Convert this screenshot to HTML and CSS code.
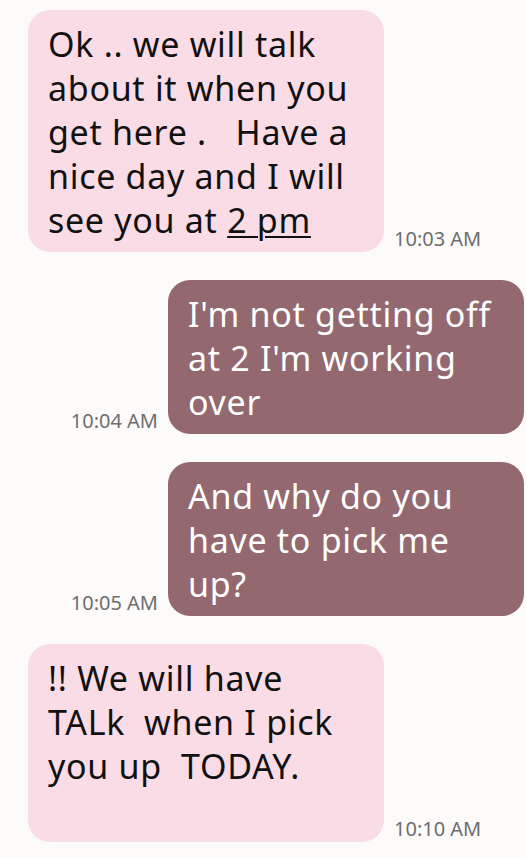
FILE: index.html
```
<!DOCTYPE html>
<html lang="en">
<head>
    <meta charset="UTF-8">
    <meta name="viewport" content="width=device-width, initial-scale=1.0">
    <title>Messages</title>
    <link rel="stylesheet" href="styles.css">
</head>
<body>

    <div class="thread">
        <div class="row incoming">
            <div class="bubble">Ok .. we will talk<br>about it when you<br>get here .&nbsp;&nbsp; Have a<br>nice day and I will<br>see you at <span class="link">2 pm</span></div>
            <span class="time">10:03 AM</span>
        </div>

        <div class="row outgoing">
            <span class="time">10:04 AM</span>
            <div class="bubble">I'm not getting off<br>at 2 I'm working<br>over</div>
        </div>

        <div class="row outgoing">
            <span class="time">10:05 AM</span>
            <div class="bubble">And why do you<br>have to pick me<br>up?</div>
        </div>

        <div class="row incoming">
            <div class="bubble">!! We will have<br>TALk&nbsp; when I pick<br>you up&nbsp; TODAY.<br>&nbsp;</div>
            <span class="time">10:10 AM</span>
        </div>
    </div>

</body>
</html>
```

FILE: styles.css
```
* { margin: 0; padding: 0; box-sizing: border-box; }
body {
    background-color: #fcfbfa;
    font-family: 'Noto Sans', sans-serif;
}
.thread {
    display: flex;
    flex-direction: column;
    gap: 28px;
    padding: 10px 2px 0 28px;
}
.row {
    display: flex;
    align-items: flex-end;
    gap: 10px;
}
.outgoing { justify-content: flex-end; }
.bubble {
    width: 356px;
    padding: 12px 10px 10px 20px;
    border-radius: 22px;
    font-size: 34px;
    letter-spacing: 0.7px;
    line-height: 44px;
    white-space: nowrap;
}
.incoming .bubble {
    background-color: #f9dce6;
    color: #111;
}
.outgoing .bubble {
    background-color: #93686f;
    color: #fff;
}
.link {
    text-decoration: underline;
    text-decoration-thickness: 2px;
    text-underline-offset: 3px;
}
.time {
    font-size: 20px;
    color: #6e6e6e;
    white-space: nowrap;
}
```
